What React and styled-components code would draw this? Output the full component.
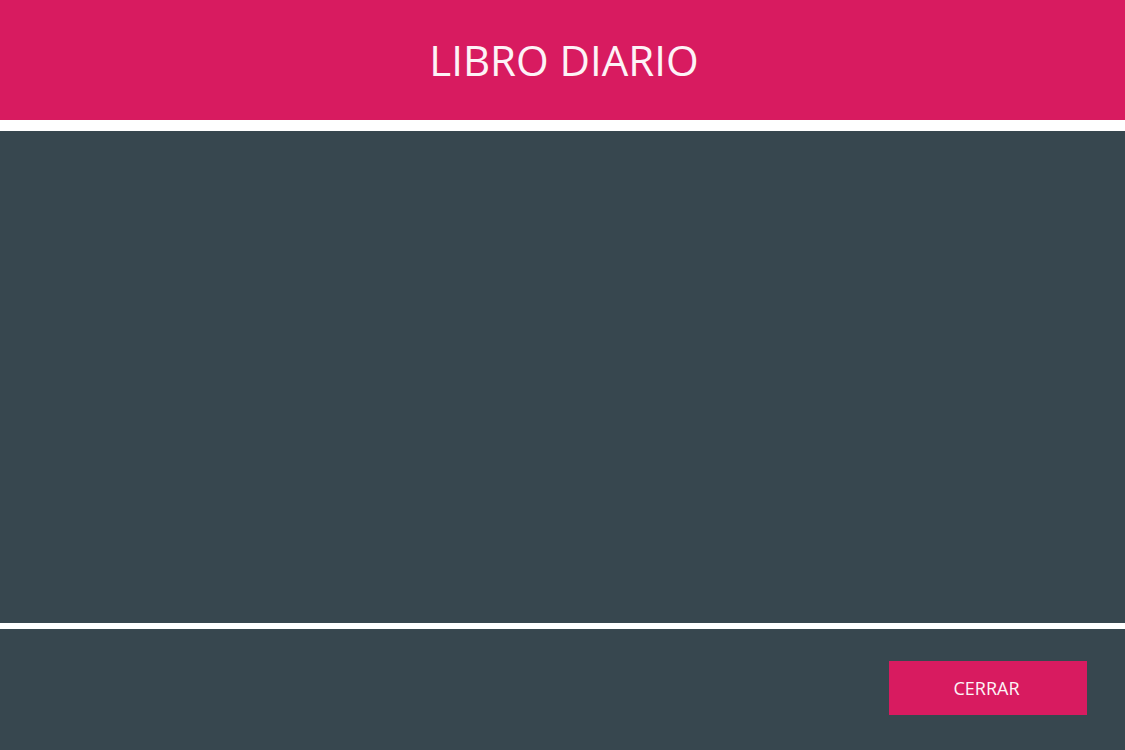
import React from 'react'
import styled, { createGlobalStyle } from 'styled-components'

const GlobalStyle = createGlobalStyle`
  html, body {
    margin: 0;
    padding: 0;
    background: #ffffff;
    font-family: 'Open Sans', 'Liberation Sans', sans-serif;
  }
`

const Page = styled.div`
  height: 750px;
  display: flex;
  flex-direction: column;
  background: #ffffff;
`

const Header = styled.header`
  height: 120px;
  flex-shrink: 0;
  background: #d81b60;
  display: flex;
  justify-content: center;
  padding: 34px 0 0 3px;
  box-sizing: border-box;
`

const Title = styled.h1`
  margin: 0;
  font-weight: 400;
  font-size: 42px;
  line-height: 52px;
  color: #fdf3f7;
`

const Body = styled.main`
  margin-top: 11px;
  height: 492px;
  background: #37474f;
`

const Footer = styled.footer`
  margin-top: 6px;
  flex: 1;
  background: #37474f;
  display: flex;
  justify-content: flex-end;
  align-items: flex-start;
  padding: 32px 38px 0 0;
`

const Button = styled.button`
  width: 198px;
  height: 54px;
  border: none;
  padding: 0 3px 0 0;
  background: #d81b60;
  color: #fdf3f7;
  font-family: 'Open Sans', 'Liberation Sans', sans-serif;
  font-size: 18px;
  cursor: pointer;
`

const App = () => (
  <Page>
    <GlobalStyle />
    <Header>
      <Title>LIBRO DIARIO</Title>
    </Header>
    <Body />
    <Footer>
      <Button>CERRAR</Button>
    </Footer>
  </Page>
)

export default App
